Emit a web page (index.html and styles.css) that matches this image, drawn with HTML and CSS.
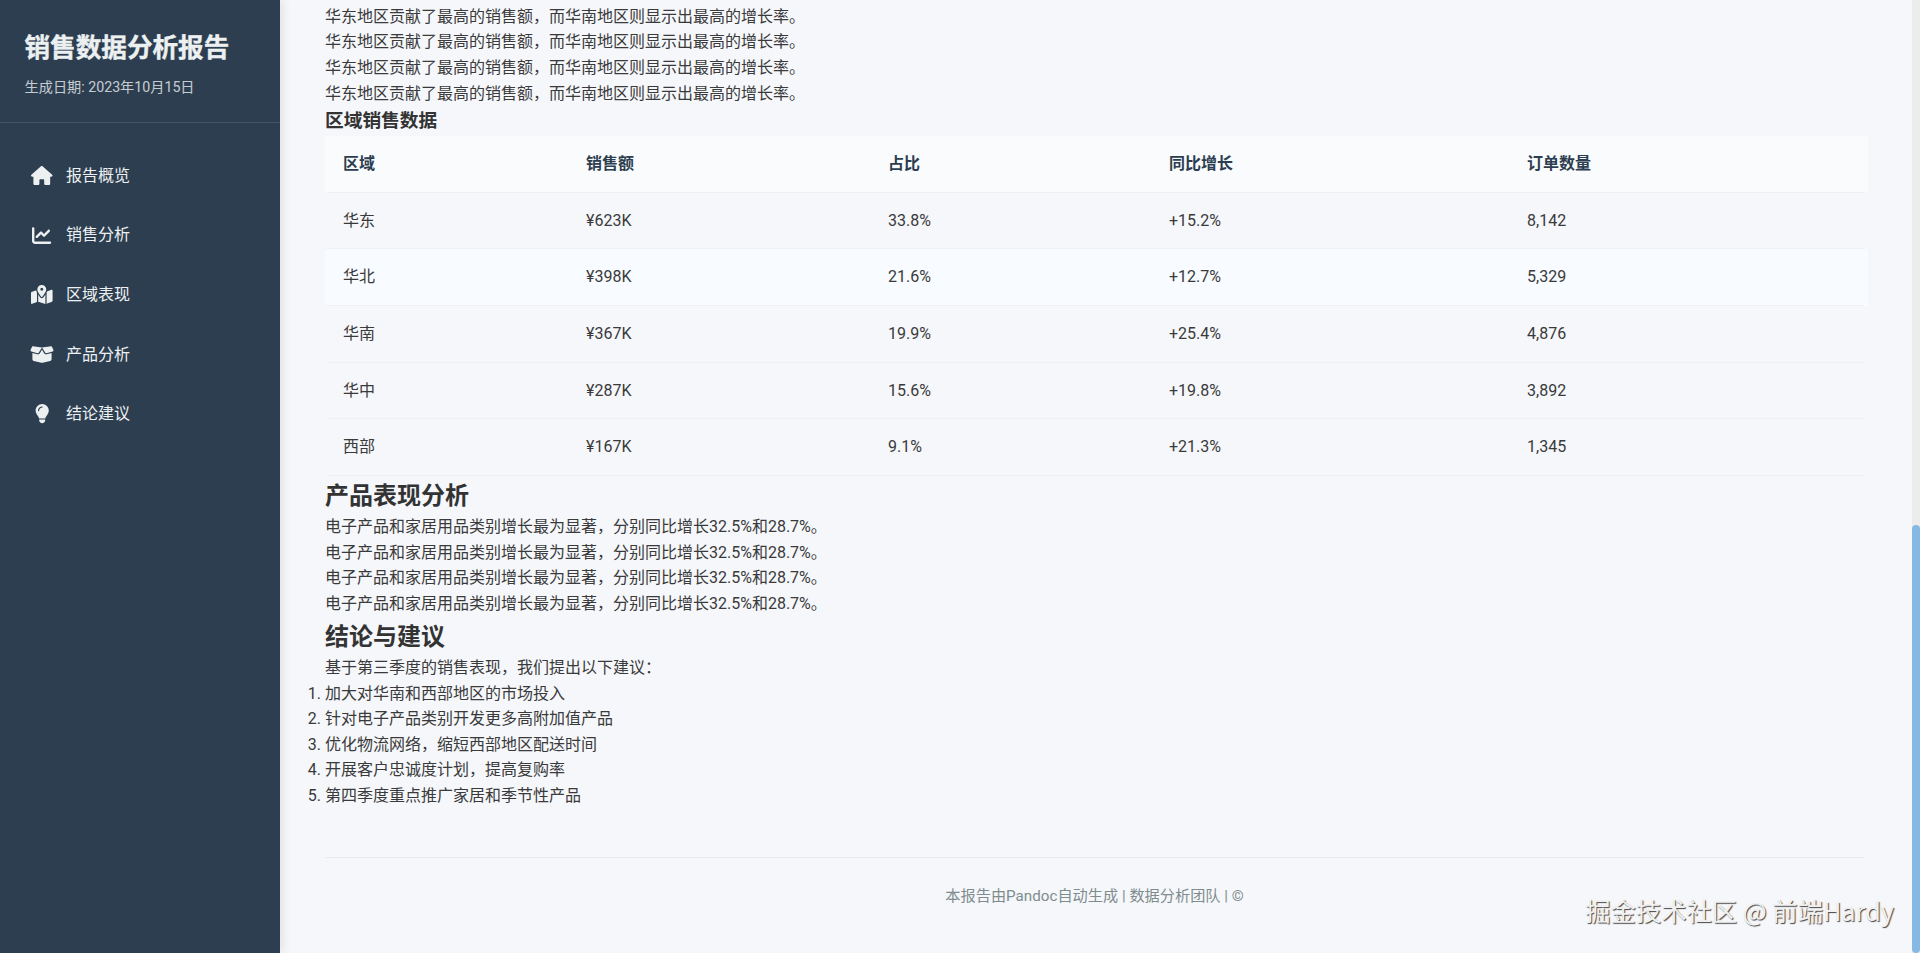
FILE: index.html
```html
<!DOCTYPE html>
<html lang="zh-CN">
<head>
<meta charset="utf-8">
<title>销售数据分析报告</title>
<link rel="stylesheet" href="styles.css">
</head>
<body>
<aside class="sidebar">
  <header class="brand">
    <h1>销售数据分析报告</h1>
    <p>生成日期: 2023年10月15日</p>
  </header>
  <nav class="nav">
    <a class="nav-item"><span class="nav-icon"><svg viewBox="0 0 576 512"><path d="M575.8 255.5c0 18-15 32.1-32 32.1h-32l.7 160.2c0 2.7-.2 5.4-.5 8.1V472c0 22.1-17.9 40-40 40H456c-1.1 0-2.2 0-3.3-.1c-1.4 .1-2.8 .1-4.2 .1H416 392c-22.1 0-40-17.9-40-40V448 384c0-17.7-14.3-32-32-32H256c-17.7 0-32 14.3-32 32v64 24c0 22.1-17.9 40-40 40H160 128.1c-1.5 0-3-.1-4.5-.2c-1.2 .1-2.4 .2-3.6 .2H104c-22.1 0-40-17.9-40-40V360c0-.9 0-1.9 .1-2.8V287.6H32c-18 0-32-14-32-32.1c0-9 3-17 10-24L266.4 8c7-7 15-8 22-8s15 2 21 7L564.8 231.5c8 7 12 15 11 24z"/></svg></span>报告概览</a>
    <a class="nav-item"><span class="nav-icon"><svg viewBox="0 0 512 512"><path d="M64 64c0-17.7-14.3-32-32-32S0 46.3 0 64V400c0 44.2 35.8 80 80 80H480c17.7 0 32-14.3 32-32s-14.3-32-32-32H80c-8.8 0-16-7.2-16-16V64zm406.6 86.6c12.5-12.5 12.5-32.8 0-45.3s-32.8-12.5-45.3 0L320 210.7l-57.4-57.4c-12.5-12.5-32.8-12.5-45.3 0l-112 112c-12.5 12.5-12.5 32.8 0 45.3s32.8 12.5 45.3 0L240 221.3l57.4 57.4c12.5 12.5 32.8 12.5 45.3 0l128-128z"/></svg></span>销售分析</a>
    <a class="nav-item"><span class="nav-icon"><svg viewBox="0 0 576 512"><path d="M408 120c0 54.6-73.1 151.9-105.2 192c-7.7 9.6-22 9.6-29.6 0C241.1 271.9 168 174.6 168 120C168 53.7 221.7 0 288 0s120 53.7 120 120zm8 80.4c3.5-6.9 6.7-13.8 9.6-20.6c.5-1.2 1-2.5 1.5-3.7l116-46.4C558.9 123.4 576 135 576 152V422.8c0 9.8-6 18.6-15.1 22.3L416 503V200.4zM137.6 138.3c2.4 14.1 7.2 28.3 12.8 41.5c2.9 6.8 6.1 13.7 9.6 20.6V451.8L32.9 502.7C17.1 509 0 497.4 0 480.4V209.6c0-9.8 6-18.6 15.1-22.3l122.6-49zM327.8 332c13.9-17.4 35.7-45.7 56.2-77V504.3L192 449.4V255c20.5 31.3 42.3 59.6 56.2 77c20.5 25.6 59.1 25.6 79.6 0zM288 152a40 40 0 1 0 0-80 40 40 0 1 0 0 80z"/></svg></span>区域表现</a>
    <a class="nav-item"><span class="nav-icon"><svg viewBox="0 0 640 512"><path d="M58.9 42.1c3-6.1 9.6-9.6 16.3-8.7L320 64 564.8 33.4c6.7-.8 13.3 2.7 16.3 8.7l41.7 83.4c9 17.9-.6 39.6-19.8 45.1L439.6 217.3c-13.9 4-28.8-1.9-36.2-14.3L320 64 236.6 203c-7.4 12.4-22.3 18.3-36.2 14.3L37.1 170.6c-19.3-5.5-28.8-27.2-19.8-45.1L58.9 42.1zM321.1 128l54.9 91.4c14.9 24.8 44.6 36.6 72.5 28.6L576 211.6v167c0 22-15 41.2-36.4 46.6l-204.1 51c-10.2 2.6-20.9 2.6-31 0l-204.1-51C79 419.7 64 400.5 64 378.5v-167L191.6 248c27.8 8 57.6-3.8 72.5-28.6L318.9 128h2.2z"/></svg></span>产品分析</a>
    <a class="nav-item"><span class="nav-icon"><svg viewBox="0 0 384 512"><path d="M272 384c9.6-31.9 29.5-59.1 49.2-86.2l0 0c5.2-7.1 10.4-14.2 15.4-21.4c19.8-28.5 31.4-63 31.4-100.3C368 78.8 289.2 0 192 0S16 78.8 16 176c0 37.3 11.6 71.9 31.4 100.3c5 7.2 10.2 14.3 15.4 21.4h0c19.8 27.1 39.7 54.4 49.2 86.2H272zM192 512c44.2 0 80-35.8 80-80V416H112v16c0 44.2 35.8 80 80 80zM112 176c0 8.8-7.2 16-16 16s-16-7.2-16-16c0-61.9 50.1-112 112-112c8.8 0 16 7.2 16 16s-7.2 16-16 16c-44.2 0-80 35.8-80 80z"/></svg></span>结论建议</a>
  </nav>
</aside>
<main class="main">
  <p>华东地区贡献了最高的销售额，而华南地区则显示出最高的增长率。</p>
  <p>华东地区贡献了最高的销售额，而华南地区则显示出最高的增长率。</p>
  <p>华东地区贡献了最高的销售额，而华南地区则显示出最高的增长率。</p>
  <p>华东地区贡献了最高的销售额，而华南地区则显示出最高的增长率。</p>
  <h3>区域销售数据</h3>
  <table class="data">
    <colgroup><col class="c1"><col class="c2"><col class="c3"><col class="c4"><col class="c5"></colgroup>
    <thead>
      <tr class="head"><th>区域</th><th>销售额</th><th>占比</th><th>同比增长</th><th>订单数量</th></tr>
    </thead>
    <tbody>
      <tr><td>华东</td><td>¥623K</td><td>33.8%</td><td>+15.2%</td><td>8,142</td></tr>
      <tr class="hover"><td>华北</td><td>¥398K</td><td>21.6%</td><td>+12.7%</td><td>5,329</td></tr>
      <tr><td>华南</td><td>¥367K</td><td>19.9%</td><td>+25.4%</td><td>4,876</td></tr>
      <tr><td>华中</td><td>¥287K</td><td>15.6%</td><td>+19.8%</td><td>3,892</td></tr>
      <tr><td>西部</td><td>¥167K</td><td>9.1%</td><td>+21.3%</td><td>1,345</td></tr>
    </tbody>
  </table>
  <h2>产品表现分析</h2>
  <p>电子产品和家居用品类别增长最为显著，分别同比增长32.5%和28.7%。</p>
  <p>电子产品和家居用品类别增长最为显著，分别同比增长32.5%和28.7%。</p>
  <p>电子产品和家居用品类别增长最为显著，分别同比增长32.5%和28.7%。</p>
  <p>电子产品和家居用品类别增长最为显著，分别同比增长32.5%和28.7%。</p>
  <h2>结论与建议</h2>
  <p>基于第三季度的销售表现，我们提出以下建议：</p>
  <ol>
    <li>加大对华南和西部地区的市场投入</li>
    <li>针对电子产品类别开发更多高附加值产品</li>
    <li>优化物流网络，缩短西部地区配送时间</li>
    <li>开展客户忠诚度计划，提高复购率</li>
    <li>第四季度重点推广家居和季节性产品</li>
  </ol>
  <footer class="foot">本报告由Pandoc自动生成 | 数据分析团队 | ©</footer>
</main>
<div class="scrollbar"><div class="thumb"></div></div>
<div class="watermark">掘金技术社区 @ 前端Hardy</div>
</body>
</html>
```

FILE: styles.css
```css
* { box-sizing: border-box; }
html, body { height: 100%; }
body {
  margin: 0;
  display: flex;
  overflow: hidden;
  background: #f5f7fb;
  color: #3a3a3a;
  font: 16px/1.6 Roboto, "Noto Sans CJK SC", sans-serif;
}
.sidebar {
  width: 280px;
  flex: none;
  background: #2c3e50;
  color: #ecf0f1;
  box-shadow: 2px 0 10px rgba(0, 0, 0, .1);
  position: relative;
}
.brand {
  padding: 27.5px 24px 23.5px 24.5px;
  border-bottom: 1px solid #42566b;
}
.brand h1 {
  margin: 0 0 7px;
  font-size: 25.6px;
  font-weight: 700;
  line-height: 41px;
  -webkit-text-stroke: .4px #ecf0f1;
}
.brand p {
  margin: 0;
  font-size: 14.2px;
  line-height: 23px;
  opacity: .8;
}
.nav {
  display: flex;
  flex-direction: column;
  gap: 10px;
  padding: 27.9px 0 0 30px;
}
.nav-item {
  display: flex;
  align-items: center;
  gap: 12px;
  padding: 12px 0;
}
.nav-icon {
  width: 24px;
  height: 20px;
  display: flex;
  align-items: center;
  justify-content: center;
}
.nav-icon svg {
  height: 19.2px;
  fill: #ecf0f1;
}
.main {
  flex: 1;
  min-width: 0;
  padding: 3.9px 48px 0 45px;
}
.main p { margin: 0; }
h3 {
  margin: 0;
  font-size: 18.72px;
  font-weight: 700;
  line-height: 30px;
  color: #333;
}
h2 {
  margin: 0;
  padding-top: 2.4px;
  font-size: 24px;
  font-weight: 700;
  line-height: 36px;
  color: #333;
}
.data {
  width: 1537px;
  margin-left: 2px;
  border-collapse: collapse;
  table-layout: fixed;
}
.c1 { width: 243px; }
.c2 { width: 302px; }
.c3 { width: 281px; }
.c4 { width: 358px; }
.c5 { width: 353px; }
.data th, .data td {
  padding: 15px 16px;
  text-align: left;
  border-bottom: 1px solid #eef0f4;
}
.data th { color: #2c3e50; font-weight: 700; }
.head th { background: #fafbfd; }
.hover td { background: #f8fbff; }
.head th:first-child { box-shadow: -2px 0 0 #fafbfd; }
.head th:last-child { box-shadow: 4px 0 0 #fafbfd; }
.hover td:first-child { box-shadow: -2px 0 0 #f8fbff; }
.hover td:last-child { box-shadow: 4px 0 0 #f8fbff; }
ol { margin: 0; padding: 0; }
.foot {
  margin-top: 48.7px;
  padding-top: 27px;
  border-top: 1px solid #e9ebef;
  font-size: 15.2px;
  line-height: 23px;
  text-align: center;
  color: #7f8c8d;
}
.scrollbar {
  width: 8px;
  flex: none;
  background: #ececec;
  padding-top: 525px;
}
.thumb {
  height: 100%;
  background: #85b9e3;
  border-radius: 4px;
}
.watermark {
  position: absolute;
  right: 26px;
  top: 891px;
  font-family: "Noto Sans CJK SC", sans-serif;
  font-size: 25.3px;
  line-height: 38px;
  color: #f1f1f1;
  text-shadow: 1px 1px 1px #444;
  white-space: nowrap;
}
```
